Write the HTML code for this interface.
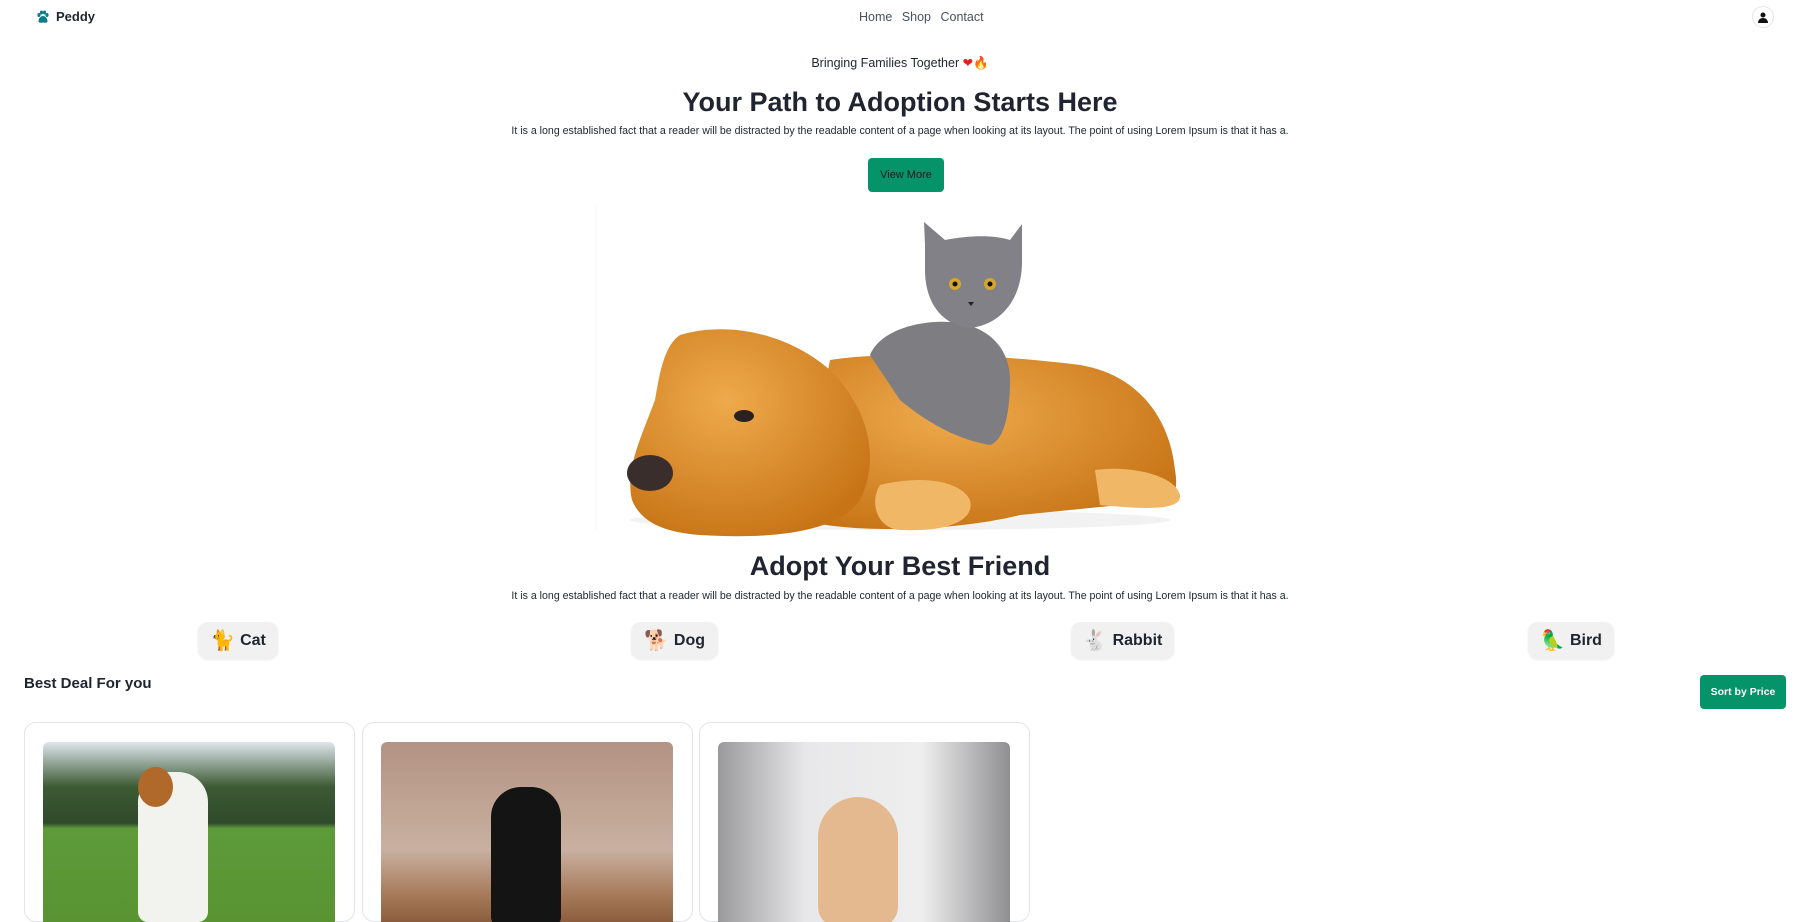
<!DOCTYPE html>
<html><head><meta charset="utf-8"><style>
*{margin:0;padding:0;box-sizing:border-box}
body{width:1800px;height:881px;overflow:hidden;background:#fff;font-family:"Liberation Sans",sans-serif;color:#1f2430;position:relative}
.a{position:absolute}
.c{position:absolute;left:0;width:1800px;text-align:center}
.pill{position:absolute;top:622px;height:37px;background:#f1f1f1;border-radius:10px;font-weight:bold;font-size:16px;display:flex;align-items:center;justify-content:center;gap:5px;box-shadow:0 1px 2px rgba(0,0,0,.08)}
.card{position:absolute;top:722px;width:331px;height:200px;border:1px solid #e2e4ea;border-radius:12px;background:#fff}
.img{position:absolute;left:18px;top:19px;width:292px;height:180px;border-radius:6px 6px 0 0;overflow:hidden}
</style></head><body>
<div class="a" style="left:36px;top:9px;font-weight:bold;font-size:13px;display:flex;align-items:center;gap:6px">
<svg width="14" height="14" viewBox="0 0 14 14" fill="#0e7c86"><ellipse cx="3" cy="5" rx="1.6" ry="2"/><ellipse cx="5.5" cy="2.5" rx="1.6" ry="2"/><ellipse cx="8.5" cy="2.5" rx="1.6" ry="2"/><ellipse cx="11" cy="5" rx="1.6" ry="2"/><path d="M7 6c-2.5 0-4.5 3-4.5 5 0 2 2 2 4.5 1.5 2.5.5 4.5.5 4.5-1.5 0-2-2-5-4.5-5z"/></svg>Peddy</div>
<div class="a" style="left:859px;top:10px;font-size:12.5px;color:#4a5060;word-spacing:6px">Home Shop Contact</div>
<div class="a" style="left:1752px;top:6px;width:22px;height:22px;border-radius:50%;border:1px solid #e5e5e5;display:flex;align-items:center;justify-content:center">
<svg width="10" height="11" viewBox="0 0 10 11" fill="#111"><circle cx="5" cy="3" r="2.5"/><path d="M0 11c0-3 2-5 5-5s5 2 5 5z"/></svg></div>
<div class="c" style="top:55px;font-size:12.5px">Bringing Families Together <span style="color:#d22">❤</span><span style="color:#f08a00">🔥</span></div>
<div class="c" style="top:87px;font-size:27px;font-weight:bold">Your Path to Adoption Starts Here</div>
<div class="c" style="top:125px;font-size:10.6px">It is a long established fact that a reader will be distracted by the readable content of a page when looking at its layout. The point of using Lorem Ipsum is that it has a.</div>
<div class="a" style="left:868px;top:158px;width:76px;height:34px;background:#05936a;border-radius:4px;font-size:11px;display:flex;align-items:center;justify-content:center;color:#1a1a1a">View More</div>
<svg class="a" style="left:0;top:0" width="1800" height="881">
<defs><radialGradient id="dg" cx="40%" cy="35%" r="70%"><stop offset="0" stop-color="#eeaa4c"/><stop offset="1" stop-color="#c77416"/></radialGradient></defs>
<line x1="596" y1="205" x2="596" y2="530" stroke="#f6f6f6"/>
<ellipse cx="900" cy="520" rx="270" ry="10" fill="#f2f2f2"/>
<path d="M830 360 C900 350 1000 355 1080 365 C1140 375 1170 420 1175 470 C1180 500 1170 510 1120 505 L1020 515 C960 530 860 535 800 520 Z" fill="url(#dg)"/>
<path d="M680 335 C730 320 790 335 830 370 C870 410 880 460 860 500 C840 530 780 540 700 535 C660 532 640 520 632 500 C625 470 640 440 655 400 C660 370 665 345 680 335Z" fill="url(#dg)"/>
<ellipse cx="650" cy="473" rx="23" ry="18" fill="#3a2e2c"/>
<ellipse cx="744" cy="416" rx="10" ry="6" fill="#2a2020"/>
<path d="M880 485 C920 475 960 480 970 500 C975 520 950 532 900 530 C875 528 870 500 880 485Z" fill="#f0b866"/>
<path d="M1095 470 C1130 465 1175 475 1180 495 C1182 510 1150 510 1100 505Z" fill="#f0b866"/>
<path d="M870 355 C880 330 920 320 950 322 C990 325 1010 350 1010 380 C1010 410 1005 440 990 445 C960 440 930 425 900 400 Z" fill="#7d7d82"/>
<path d="M925 245 L924 222 L945 240 C970 235 995 235 1010 240 L1022 224 L1022 262 C1022 300 1000 325 970 328 C940 325 925 300 925 270Z" fill="#818187"/>
<circle cx="955" cy="284" r="6" fill="#d4a62a"/><circle cx="990" cy="284" r="6" fill="#d4a62a"/>
<circle cx="955" cy="284" r="2.5" fill="#111"/><circle cx="990" cy="284" r="2.5" fill="#111"/>
<path d="M968 302 l6 0 l-3 4z" fill="#222"/>
</svg>
<div class="c" style="top:551px;font-size:27px;font-weight:bold">Adopt Your Best Friend</div>
<div class="c" style="top:590px;font-size:10.6px">It is a long established fact that a reader will be distracted by the readable content of a page when looking at its layout. The point of using Lorem Ipsum is that it has a.</div>
<div class="pill" style="left:198px;width:80px"><span style="font-size:20px">🐈</span>Cat</div>
<div class="pill" style="left:631px;width:87px"><span style="font-size:20px">🐕</span>Dog</div>
<div class="pill" style="left:1071px;width:103px"><span style="font-size:20px">🐇</span>Rabbit</div>
<div class="pill" style="left:1528px;width:86px"><span style="font-size:20px">🦜</span>Bird</div>
<div class="a" style="left:24px;top:675px;font-size:15px;font-weight:bold">Best Deal For you</div>
<div class="a" style="left:1700px;top:675px;width:86px;height:34px;background:#05936a;border-radius:4px;color:#fff;font-size:10.5px;font-weight:bold;display:flex;align-items:center;justify-content:center">Sort by Price</div>
<div class="card" style="left:24px"><div class="img" style="background:linear-gradient(#dfe6ee 0,#3c5a33 25%,#2f4a2b 45%,#5d9a3a 48%,#5a9432 100%)"><div class="a" style="left:95px;top:30px;width:70px;height:150px;background:#f2f2ee;border-radius:30px 30px 10px 10px"></div><div class="a" style="left:95px;top:25px;width:35px;height:40px;background:#b0692a;border-radius:50%"></div></div></div>
<div class="card" style="left:362px"><div class="img" style="background:linear-gradient(#b39383,#c9b0a0 60%,#a77a5a 85%,#8c5e3f)"><div class="a" style="left:110px;top:45px;width:70px;height:140px;background:#141414;border-radius:30px 30px 10px 10px"></div></div></div>
<div class="card" style="left:699px"><div class="img" style="background:linear-gradient(90deg,#9a9a9c,#e8e8ea 30%,#eeeeee 70%,#8f8f92)"><div class="a" style="left:100px;top:55px;width:80px;height:130px;background:#e4b98f;border-radius:40px 40px 20px 20px"></div></div></div>
</body></html>
